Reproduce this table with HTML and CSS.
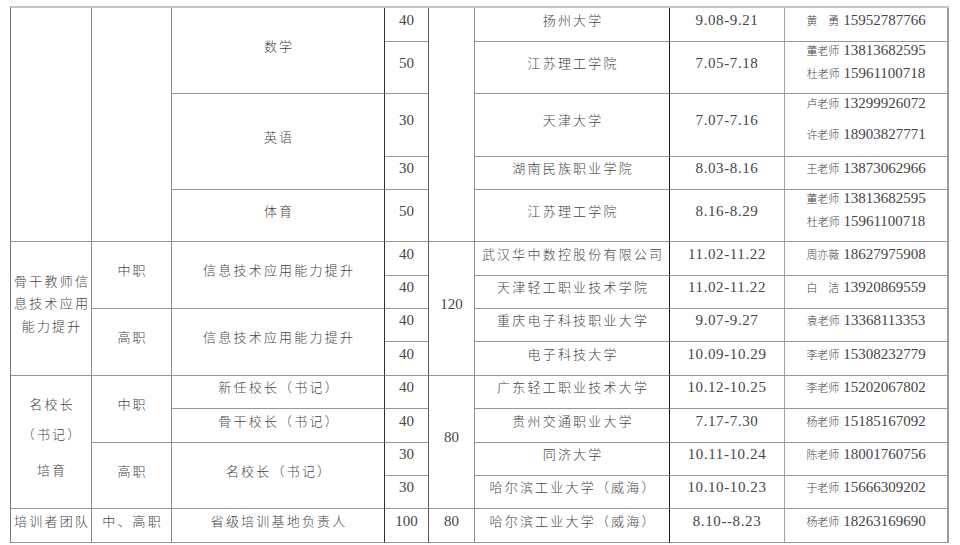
FILE: index.html
```html
<!DOCTYPE html>
<html lang="zh-CN">
<head>
<meta charset="utf-8">
<title>培训项目安排表</title>
<link rel="stylesheet" href="styles.css">
</head>
<body>
<table class="plan">
  <colgroup>
    <col class="w1"><col class="w2"><col class="w3"><col class="w4"><col class="w5"><col class="w6"><col class="w7"><col class="w8">
  </colgroup>
  <tbody>
    <tr class="h34">
      <td class="c1" rowspan="5"></td>
      <td class="c2" rowspan="5"></td>
      <td class="c3 zh" rowspan="2">数学</td>
      <td class="c4 num">40</td>
      <td class="c5" rowspan="5"></td>
      <td class="c6 zh">扬州大学</td>
      <td class="c7 date">9.08-9.21</td>
      <td class="c8"><span class="nm">黄　勇</span> <span class="ph">15952787766</span></td>
    </tr>
    <tr class="h52">
      <td class="c4 num">50</td>
      <td class="c6 zh">江苏理工学院</td>
      <td class="c7 date">7.05-7.18</td>
      <td class="c8"><div class="two"><div><span class="nm">董老师</span> <span class="ph">13813682595</span></div><div><span class="nm">杜老师</span> <span class="ph">15961100718</span></div></div></td>
    </tr>
    <tr class="h63">
      <td class="c3 zh" rowspan="2">英语</td>
      <td class="c4 num">30</td>
      <td class="c6 zh">天津大学</td>
      <td class="c7 date">7.07-7.16</td>
      <td class="c8"><div class="two wide"><div><span class="nm">卢老师</span> <span class="ph">13299926072</span></div><div><span class="nm">许老师</span> <span class="ph">18903827771</span></div></div></td>
    </tr>
    <tr class="h33">
      <td class="c4 num">30</td>
      <td class="c6 zh">湖南民族职业学院</td>
      <td class="c7 date">8.03-8.16</td>
      <td class="c8"><span class="nm">王老师</span> <span class="ph">13873062966</span></td>
    </tr>
    <tr class="h52">
      <td class="c3 zh">体育</td>
      <td class="c4 num">50</td>
      <td class="c6 zh">江苏理工学院</td>
      <td class="c7 date">8.16-8.29</td>
      <td class="c8"><div class="two"><div><span class="nm">董老师</span> <span class="ph">13813682595</span></div><div><span class="nm">杜老师</span> <span class="ph">15961100718</span></div></div></td>
    </tr>
    <tr class="h34">
      <td class="c1 zh lines" rowspan="4">骨干教师信<br>息技术应用<br>能力提升</td>
      <td class="c2 zh" rowspan="2">中职</td>
      <td class="c3 zh" rowspan="2">信息技术应用能力提升</td>
      <td class="c4 num">40</td>
      <td class="c5 num" rowspan="4">120</td>
      <td class="c6 zh">武汉华中数控股份有限公司</td>
      <td class="c7 date">11.02-11.22</td>
      <td class="c8"><span class="nm">周亦薇</span> <span class="ph">18627975908</span></td>
    </tr>
    <tr class="h33">
      <td class="c4 num">40</td>
      <td class="c6 zh">天津轻工职业技术学院</td>
      <td class="c7 date">11.02-11.22</td>
      <td class="c8"><span class="nm">白　洁</span> <span class="ph">13920869559</span></td>
    </tr>
    <tr class="h33">
      <td class="c2 zh" rowspan="2">高职</td>
      <td class="c3 zh" rowspan="2">信息技术应用能力提升</td>
      <td class="c4 num">40</td>
      <td class="c6 zh">重庆电子科技职业大学</td>
      <td class="c7 date">9.07-9.27</td>
      <td class="c8"><span class="nm">袁老师</span> <span class="ph">13368113353</span></td>
    </tr>
    <tr class="h34">
      <td class="c4 num">40</td>
      <td class="c6 zh">电子科技大学</td>
      <td class="c7 date">10.09-10.29</td>
      <td class="c8"><span class="nm">李老师</span> <span class="ph">15308232779</span></td>
    </tr>
    <tr class="h33">
      <td class="c1 zh" rowspan="4"><div class="p1">名校长</div><div class="p2">（书记）</div><div class="p3">培育</div></td>
      <td class="c2 zh" rowspan="2">中职</td>
      <td class="c3 zh">新任校长（书记）</td>
      <td class="c4 num">40</td>
      <td class="c5 num" rowspan="4">80</td>
      <td class="c6 zh">广东轻工职业技术大学</td>
      <td class="c7 date">10.12-10.25</td>
      <td class="c8"><span class="nm">李老师</span> <span class="ph">15202067802</span></td>
    </tr>
    <tr class="h34">
      <td class="c3 zh">骨干校长（书记）</td>
      <td class="c4 num">40</td>
      <td class="c6 zh">贵州交通职业大学</td>
      <td class="c7 date">7.17-7.30</td>
      <td class="c8"><span class="nm">杨老师</span> <span class="ph">15185167092</span></td>
    </tr>
    <tr class="h33">
      <td class="c2 zh" rowspan="2">高职</td>
      <td class="c3 zh" rowspan="2">名校长（书记）</td>
      <td class="c4 num">30</td>
      <td class="c6 zh">同济大学</td>
      <td class="c7 date">10.11-10.24</td>
      <td class="c8"><span class="nm">陈老师</span> <span class="ph">18001760756</span></td>
    </tr>
    <tr class="h33">
      <td class="c4 num">30</td>
      <td class="c6 zh">哈尔滨工业大学（威海）</td>
      <td class="c7 date">10.10-10.23</td>
      <td class="c8"><span class="nm">于老师</span> <span class="ph">15666309202</span></td>
    </tr>
    <tr class="h34">
      <td class="c1 zh">培训者团队</td>
      <td class="c2 zh">中、高职</td>
      <td class="c3 zh">省级培训基地负责人</td>
      <td class="c4 num">100</td>
      <td class="c5 num">80</td>
      <td class="c6 zh">哈尔滨工业大学（威海）</td>
      <td class="c7 date">8.10--8.23</td>
      <td class="c8"><span class="nm">杨老师</span> <span class="ph">18263169690</span></td>
    </tr>
  </tbody>
</table>
</body>
</html>
```
FILE: styles.css
```css
html, body {
  margin: 0;
  padding: 0;
  background: #ffffff;
}

body {
  padding: 6px 0 0 10px;
  font-family: "Noto Sans CJK SC", sans-serif;
  color: #454545;
}

.plan {
  table-layout: fixed;
  border-collapse: separate;
  border-spacing: 0;
  width: 939px;
  border-top: 2px solid #c4c4c4;
  border-left: 1px solid #7a7a7a;
}

.w1 { width: 81px; }
.w2 { width: 80px; }
.w3 { width: 213px; }
.w4 { width: 44px; }
.w5 { width: 46px; }
.w6 { width: 195px; }
.w7 { width: 115px; }
.w8 { width: 164px; }

.h33 { height: 33px; }
.h34 { height: 34px; }
.h52 { height: 52px; }
.h63 { height: 63px; }

.plan td {
  box-sizing: border-box;
  padding: 0 0 10px 0;
  border-right: 1px solid #8c8c8c;
  border-bottom: 1px solid #969696;
  text-align: center;
  vertical-align: middle;
  font-family: "Liberation Serif", serif;
  font-size: 15px;
  line-height: 18px;
  white-space: nowrap;
  overflow: visible;
}

.plan td.c3 { border-right-color: #2e2e2e; }
.plan td.c4 { border-right-color: #5a5a5a; }
.plan td.c6 { border-right-color: #1a1a1a; }
.plan td.c7 { border-right-color: #a0a0a0; }
.plan td.c8 { border-right: 2px solid #9a9a9a; }

.plan td.zh {
  font-family: "Noto Sans CJK SC", sans-serif;
  font-size: 13px;
  font-weight: 300;
  letter-spacing: 2.2px;
  padding-left: 2.2px;
}

.plan td.lines { line-height: 22.5px; }

.p1, .p2, .p3 { line-height: 22px; }
.p2 { margin-top: 8px; }
.p3 { margin-top: 14px; }

.date { letter-spacing: 0.6px; }

.nm {
  font-family: "Noto Sans CJK SC", sans-serif;
  font-size: 11px;
  font-weight: 300;
  line-height: 1;
}

.ph { line-height: 1; }

.two {
  line-height: 23px;
  margin: -3px 0 -2px;
}

.two.wide div + div { margin-top: 8px; }
.two.wide { margin: -5px 0 -3px; }
```
